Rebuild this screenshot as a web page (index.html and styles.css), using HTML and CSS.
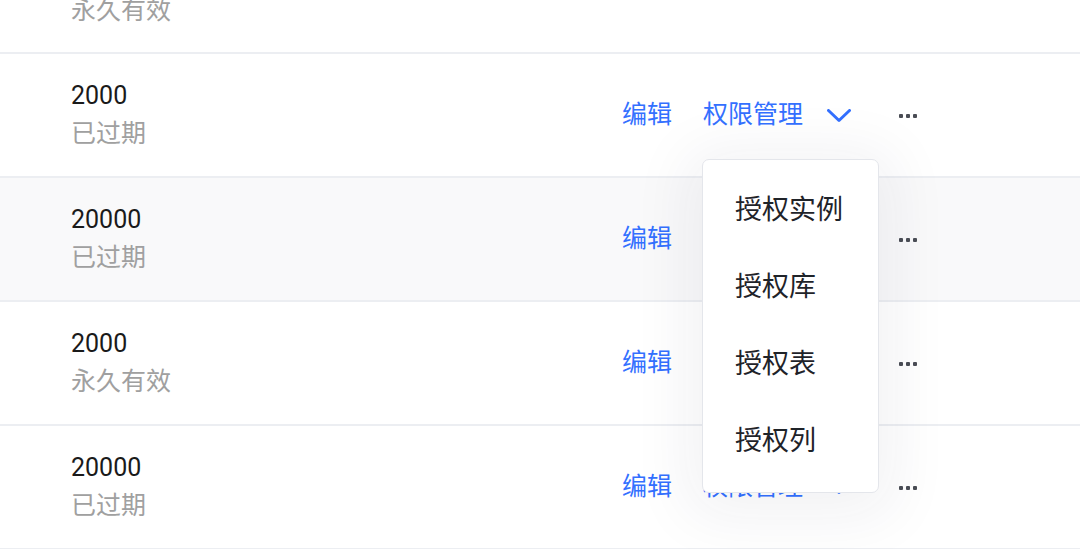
FILE: index.html
```html
<!DOCTYPE html>
<html lang="zh-CN">
<head>
  <meta charset="UTF-8">
  <meta name="viewport" content="width=device-width, initial-scale=1.0">
  <title>账号列表</title>
  <link rel="stylesheet" href="styles.css">
</head>
<body>
  <main class="list">
    <!-- 上一行只露出一部分 -->
    <div class="row">
      <div class="info">
        <div class="count">20000</div>
        <div class="status">永久有效</div>
      </div>
    </div>

    <div class="row">
      <div class="info">
        <div class="count">2000</div>
        <div class="status">已过期</div>
      </div>
      <div class="actions">
        <a class="link">编辑</a>
        <span class="trigger">
          <a class="link">权限管理</a>
          <svg class="chevron" width="24" height="14" viewBox="0 0 24 14"><path d="M1.5 1.5 L12 11.5 L22.5 1.5" fill="none" stroke="#3370ff" stroke-width="3" stroke-linecap="round" stroke-linejoin="round"/></svg>
          <!-- 下拉菜单 -->
          <ul class="dropdown">
            <li>授权实例</li>
            <li>授权库</li>
            <li>授权表</li>
            <li>授权列</li>
          </ul>
        </span>
        <svg class="more" width="18" height="4" viewBox="0 0 18 4"><rect x="0" y="0" width="4" height="4" rx="1"/><rect x="7" y="0" width="4" height="4" rx="1"/><rect x="14" y="0" width="4" height="4" rx="1"/></svg>
      </div>
    </div>

    <div class="row hover">
      <div class="info">
        <div class="count">20000</div>
        <div class="status">已过期</div>
      </div>
      <div class="actions">
        <a class="link">编辑</a>
        <span class="trigger">
          <a class="link">权限管理</a>
          <svg class="chevron" width="24" height="14" viewBox="0 0 24 14"><path d="M1.5 1.5 L12 11.5 L22.5 1.5" fill="none" stroke="#3370ff" stroke-width="3" stroke-linecap="round" stroke-linejoin="round"/></svg>
        </span>
        <svg class="more" width="18" height="4" viewBox="0 0 18 4"><rect x="0" y="0" width="4" height="4" rx="1"/><rect x="7" y="0" width="4" height="4" rx="1"/><rect x="14" y="0" width="4" height="4" rx="1"/></svg>
      </div>
    </div>

    <div class="row">
      <div class="info">
        <div class="count">2000</div>
        <div class="status">永久有效</div>
      </div>
      <div class="actions">
        <a class="link">编辑</a>
        <span class="trigger">
          <a class="link">权限管理</a>
          <svg class="chevron" width="24" height="14" viewBox="0 0 24 14"><path d="M1.5 1.5 L12 11.5 L22.5 1.5" fill="none" stroke="#3370ff" stroke-width="3" stroke-linecap="round" stroke-linejoin="round"/></svg>
        </span>
        <svg class="more" width="18" height="4" viewBox="0 0 18 4"><rect x="0" y="0" width="4" height="4" rx="1"/><rect x="7" y="0" width="4" height="4" rx="1"/><rect x="14" y="0" width="4" height="4" rx="1"/></svg>
      </div>
    </div>

    <div class="row">
      <div class="info">
        <div class="count">20000</div>
        <div class="status">已过期</div>
      </div>
      <div class="actions">
        <a class="link">编辑</a>
        <span class="trigger">
          <a class="link">权限管理</a>
          <svg class="chevron" width="24" height="14" viewBox="0 0 24 14"><path d="M1.5 1.5 L12 11.5 L22.5 1.5" fill="none" stroke="#3370ff" stroke-width="3" stroke-linecap="round" stroke-linejoin="round"/></svg>
        </span>
        <svg class="more" width="18" height="4" viewBox="0 0 18 4"><rect x="0" y="0" width="4" height="4" rx="1"/><rect x="7" y="0" width="4" height="4" rx="1"/><rect x="14" y="0" width="4" height="4" rx="1"/></svg>
      </div>
    </div>
  </main>
</body>
</html>
```

FILE: styles.css
```css
html, body {
  margin: 0;
  padding: 0;
  height: 100%;
  overflow: hidden;
  background-color: white;
  font-family: Roboto, "Noto Sans CJK SC", sans-serif;
}

/* 列表已向下滚动一部分 */
.list {
  margin-top: -69px;
}

.row {
  display: flex;
  align-items: center;
  height: 124px;
  box-sizing: border-box;
  padding-left: 71px;
  border-bottom: 2px solid #eceef2;
  background-color: white;
}

.list .row:first-child {
  height: 123px;
}

.row.hover {
  background-color: #f9f9fa;
}

.info {
  width: 551px;
  font-size: 25px;
  line-height: 38px;
}

.count {
  color: #1a1a1a;
}

.status {
  color: #a0a0a0;
}

.actions {
  display: flex;
  align-items: center;
  font-size: 25px;
  line-height: 38px;
}

.link {
  color: #3370ff;
  cursor: pointer;
}

.trigger {
  position: relative;
  display: flex;
  align-items: center;
  margin-left: 31px;
}

.chevron {
  margin-left: 24px;
  margin-top: 2px;
}

.more {
  margin-left: 48px;
  margin-top: 2px;
  fill: #4a4d55;
}

.dropdown {
  position: absolute;
  top: 63px;
  left: -1px;
  z-index: 10;
  width: 177px;
  margin: 0;
  padding: 12px 0;
  list-style: none;
  box-sizing: border-box;
  background-color: white;
  border: 1px solid #e4e6eb;
  border-radius: 7px;
  box-shadow: 0 8px 60px 16px rgba(30, 40, 70, 0.06);
}

.dropdown li {
  height: 77px;
  line-height: 77px;
  padding-left: 32px;
  font-size: 27px;
  color: #1f2329;
  cursor: pointer;
}
```
